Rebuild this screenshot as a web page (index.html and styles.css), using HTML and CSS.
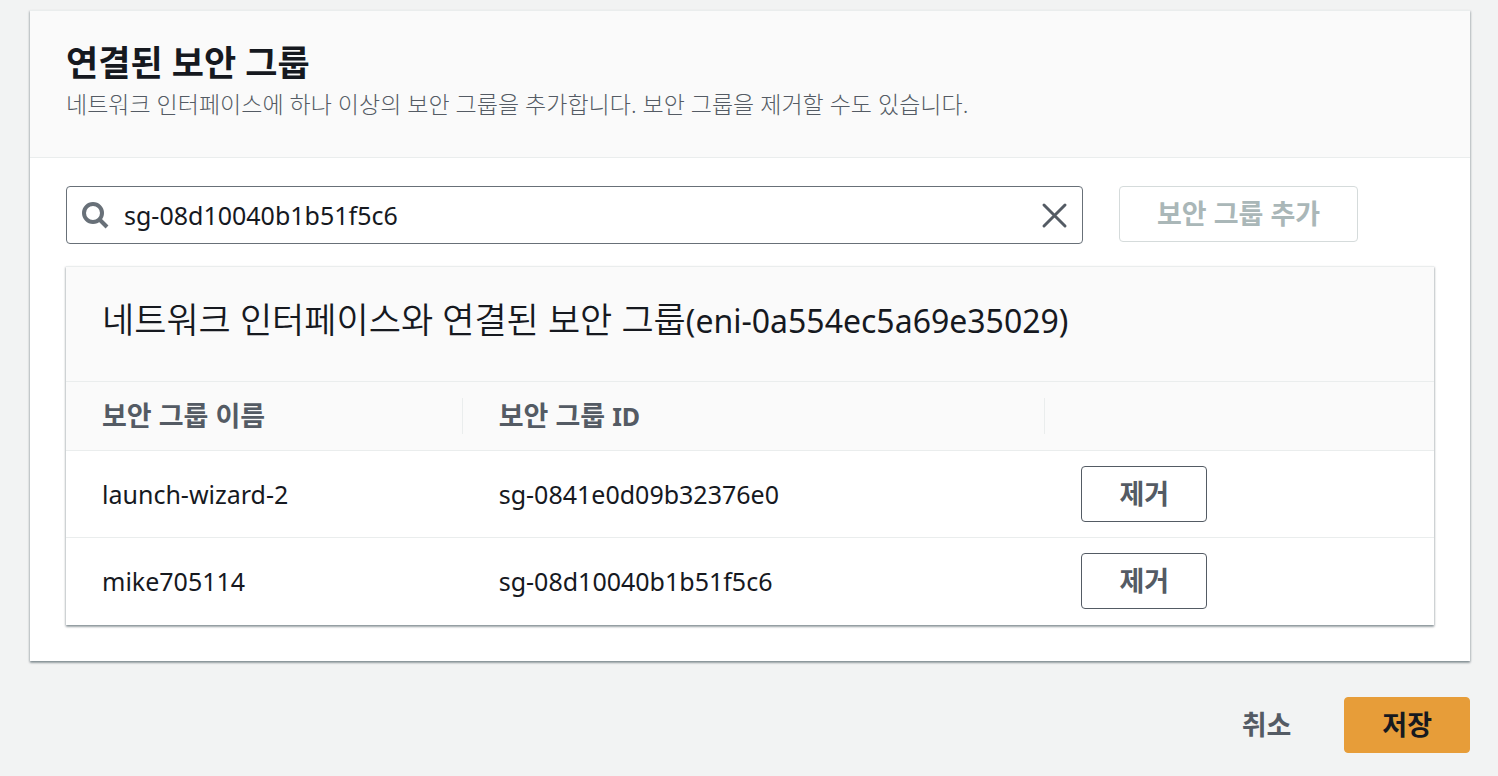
FILE: index.html
```html
<!DOCTYPE html>
<html lang="ko">
  <head>
    <meta charset="UTF-8">
    <meta name="viewport" content="width=device-width, initial-scale=1.0">
    <title>보안 그룹 변경</title>
    <link rel="stylesheet" href="styles.css">
  </head>
  <body>
    <form class="page">
      <section class="container">
        <header class="container-header">
          <h2>연결된 보안 그룹</h2>
          <p>네트워크 인터페이스에 하나 이상의 보안 그룹을 추가합니다. 보안 그룹을 제거할 수도 있습니다.</p>
        </header>
        <div class="container-body">
          <div class="search-row">
            <div class="search">
              <svg class="search-icon" viewBox="0 0 28 28" aria-hidden="true">
                <circle cx="12" cy="12" r="9"></circle>
                <path d="M18 18l8 8"></path>
              </svg>
              <input type="text" aria-label="보안 그룹 선택" value="sg-08d10040b1b51f5c6">
              <button type="button" class="clear" aria-label="지우기">
                <svg viewBox="0 0 28 28" aria-hidden="true">
                  <path d="M4 4l21 21M25 4L4 25"></path>
                </svg>
              </button>
            </div>
            <div class="search-action">
              <button type="button" class="btn" disabled>보안 그룹 추가</button>
            </div>
          </div>

          <section class="container">
            <header class="table-title">
              <h3>네트워크 인터페이스와 연결된 보안 그룹<span class="eni">(eni-0a554ec5a69e35029)</span></h3>
            </header>
            <table>
              <colgroup>
                <col class="col-name">
                <col class="col-id">
                <col>
              </colgroup>
              <thead>
                <tr>
                  <th scope="col"><div>보안 그룹 이름</div></th>
                  <th scope="col"><div>보안 그룹 <span class="latin">ID</span></div></th>
                  <td></td>
                </tr>
              </thead>
              <tbody>
                <tr>
                  <td>launch-wizard-2</td>
                  <td>sg-0841e0d09b32376e0</td>
                  <td><button type="button" class="btn">제거</button></td>
                </tr>
                <tr>
                  <td>mike705114</td>
                  <td>sg-08d10040b1b51f5c6</td>
                  <td><button type="button" class="btn">제거</button></td>
                </tr>
              </tbody>
            </table>
          </section>
        </div>
      </section>

      <div class="actions">
        <button type="button" class="btn btn-link">취소</button>
        <button type="submit" class="btn btn-primary">저장</button>
      </div>
    </form>
  </body>
</html>
```
FILE: styles.css
```css
* {
    box-sizing: border-box;
}

body {
    margin: 0;
    background: #f2f3f3;
    color: #16191f;
    font-family: "Noto Sans", "Noto Sans CJK KR", sans-serif;
    font-size: 25px;
    line-height: 36px;
}

h2, h3, p {
    margin: 0;
}

.page {
    padding: 10px 28px 23px 30px;
}

.container {
    padding-bottom: 1px;
    background: #fff;
    border-top: 1px solid #eaeded;
    box-shadow: 0 2px 2px 0 rgba(0, 28, 36, 0.3), 1px 1px 2px 0 rgba(0, 28, 36, 0.15), -1px 1px 2px 0 rgba(0, 28, 36, 0.15);
}

.container-header {
    padding: 28px 36px 35px;
    background: #fafafa;
    border-bottom: 1px solid #eaeded;
}

.container-header h2 {
    font-size: 35px;
    line-height: 47px;
    font-weight: 700;
}

.container-header p {
    color: #545b64;
    font-size: 23px;
    font-weight: 300;
}

.container-body {
    padding: 28px 36px 35px;
}

.search-row {
    display: grid;
    grid-template-columns: repeat(12, 1fr);
    column-gap: 36px;
    margin-bottom: 22px;
}

.search {
    grid-column: span 9;
    display: flex;
    align-items: center;
    height: 58px;
    padding: 0 14px;
    border: 1px solid #687078;
    border-radius: 4px;
}

.search-icon {
    width: 28px;
    height: 28px;
    fill: none;
    stroke: #687078;
    stroke-width: 4;
}

.search input {
    flex: 1;
    min-width: 0;
    padding: 0 15px;
    border: 0;
    outline: none;
    background: none;
    color: #16191f;
    font: inherit;
}

.clear {
    display: flex;
    padding: 0;
    border: 0;
    background: none;
}

.clear svg {
    width: 28px;
    height: 28px;
    fill: none;
    stroke: #545b64;
    stroke-width: 3;
    stroke-linecap: round;
}

.search-action {
    grid-column: span 3;
}

.btn {
    height: 56px;
    padding: 0 37px 1px;
    border: 1px solid #545b64;
    border-radius: 4px;
    background: #fff;
    color: #545b64;
    font-family: inherit;
    font-size: 27px;
    line-height: 36px;
    font-weight: 700;
    white-space: nowrap;
}

.btn:disabled {
    border-color: #d5dbdb;
    color: #aab7b8;
}

.btn-link {
    border-color: transparent;
    background: none;
}

.btn-primary {
    border-color: #e79d39;
    background: #e79d39;
    color: #16191f;
}

.table-title {
    padding: 30px 36px 39px;
    background: #fafafa;
    border-bottom: 1px solid #eaeded;
}

.table-title h3 {
    font-size: 35px;
    line-height: 45px;
    font-weight: 350;
}

.eni {
    font-size: 32px;
    line-height: 1;
    font-weight: 400;
}

table {
    width: 100%;
    table-layout: fixed;
    border-collapse: collapse;
}

.col-name {
    width: 29%;
}

.col-id {
    width: 42.6%;
}

thead {
    background: #fafafa;
    border-bottom: 1px solid #eaeded;
}

th {
    padding: 16px 0;
    color: #545b64;
    font-size: 27px;
    text-align: left;
}

th div {
    padding: 0 36px;
    border-right: 1px solid #eaeded;
}

.latin {
    font-size: 25px;
    line-height: 1;
}

tbody td {
    padding: 15px 36px;
}

tbody tr + tr {
    border-top: 1px solid #eaeded;
}

tbody .btn {
    display: block;
}

.actions {
    display: flex;
    justify-content: flex-end;
    gap: 15px;
    margin-top: 36px;
}
```
